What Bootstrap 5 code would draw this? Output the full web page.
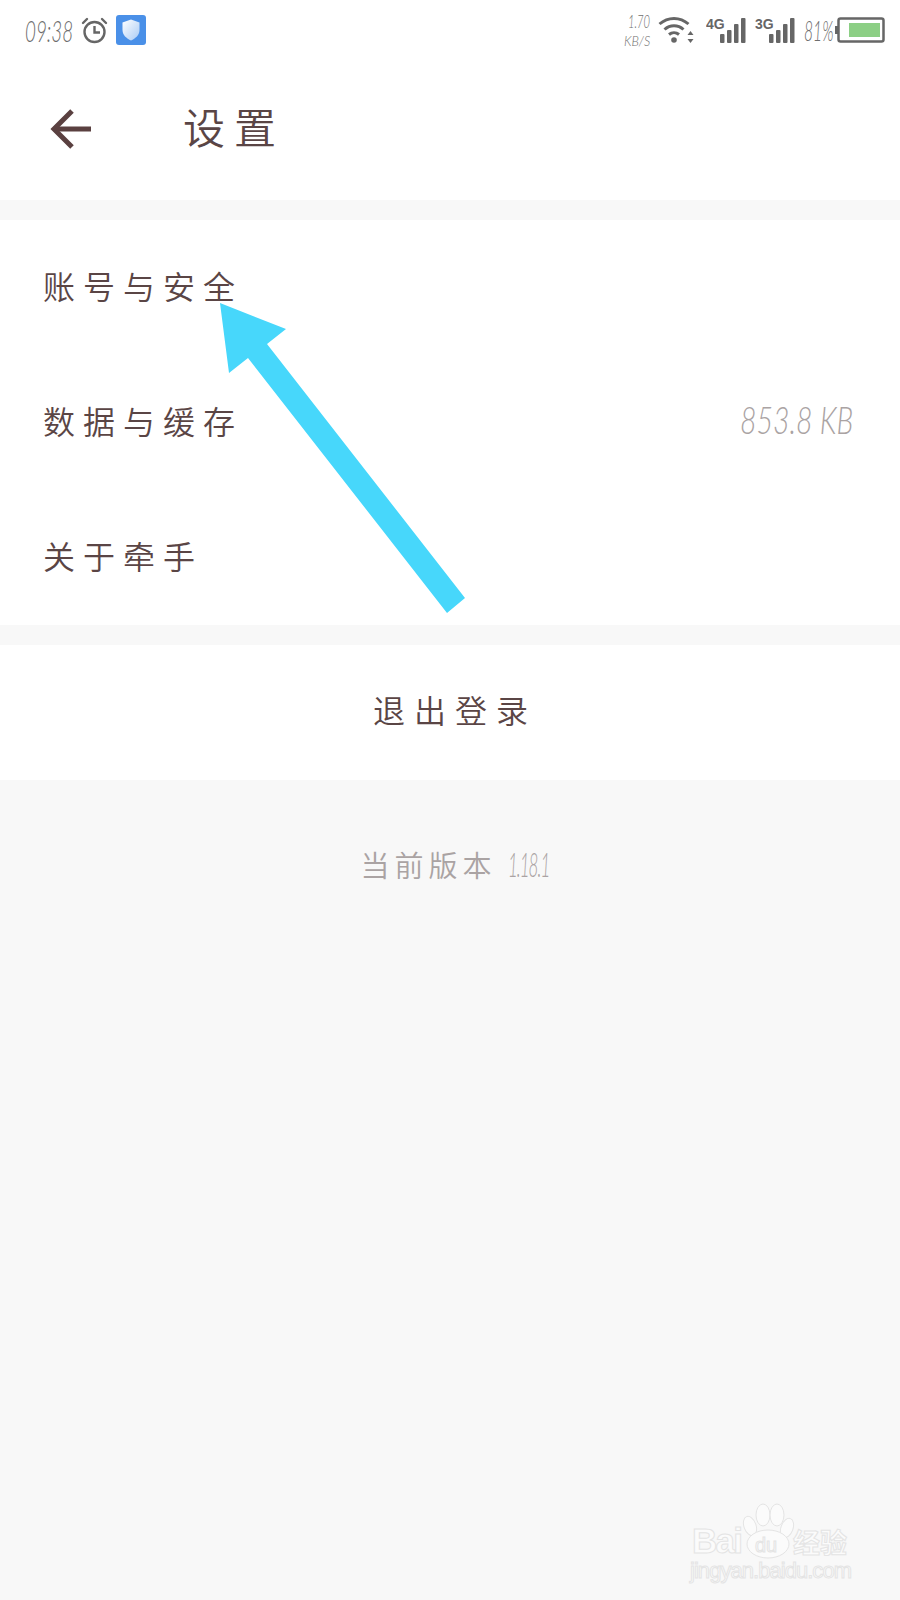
<!DOCTYPE html>
<html lang="zh-CN">
<head>
  <meta charset="UTF-8" />
  <meta name="viewport" content="width=device-width, initial-scale=1" />
  <title>设置</title>
  <link href="https://cdn.jsdelivr.net/npm/bootstrap@5.3.3/dist/css/bootstrap.min.css" rel="stylesheet" />
  <style>
    body { background: #f8f8f8; font-family: "Noto Sans CJK SC", sans-serif; font-weight: 350; color: #5a4545; }
    .page-wrap { position: relative; height: 1600px; overflow: hidden; }
    .squish { display: inline-block; white-space: nowrap; transform-origin: left center; font-family: "Lato", sans-serif; font-style: italic; font-weight: 300; }
    .status-bar { height: 60px; padding: 0 15px 0 25px; color: #6e6e6e; }
    .status-time { width: 48px; font-size: 29px; line-height: 1; transform: scaleX(.65); }
    .status-speed { width: 26px; line-height: 1; }
    .speed-top { font-size: 18px; margin-left: 4px; transform: scaleX(.62); display: block; }
    .speed-low { font-size: 14px; margin-top: 4px; transform: scaleX(.9); display: block; }
    .status-batt { width: 27px; font-size: 27px; line-height: 1; transform: scaleX(.58); }
    .shield-tile { width: 30px; height: 30px; background: #4a90e8; border-radius: 3px; }
    .tool-bar { height: 140px; padding-left: 50px; padding-bottom: 2px; }
    .tool-title { font-size: 42px; letter-spacing: 9px; margin-left: 92px; line-height: 1; margin-bottom: 6px; }
    .set-group { margin-top: 20px; }
    .set-row { height: 135px; padding: 0 45px 6px 43px; border: 0; color: #5a4545; font-size: 32px; letter-spacing: 8px; }
    .set-value { width: 115px; font-size: 37px; color: #aaa3a3; letter-spacing: 0; transform: scaleX(.77); }
    .logout-row { letter-spacing: 9px; padding: 0 43px 8px 53px; }
    .version-line { margin-top: 63px; padding-left: 6px; font-size: 29px; letter-spacing: 5px; color: #aaa3a3; line-height: 42px; }
    .version-num { width: 38px; margin-left: 11px; font-size: 34px; letter-spacing: -2px; transform: scaleX(.5); }
    .arrow-mark { position: absolute; left: 0; top: 0; width: 900px; height: 1600px; pointer-events: none; }
    .wm-ink { fill: #fbfbfb; stroke: #e4e4e4; stroke-width: 1; }
  </style>
</head>
<body>
  <div class="page-wrap">
    <div class="bg-white">
      <div class="status-bar d-flex align-items-center justify-content-between">
        <div class="d-flex align-items-center">
          <span class="squish status-time">09:38</span>
          <svg class="ms-2" width="27" height="27" viewBox="0 0 27 27" fill="none" stroke="#666" stroke-width="2.4">
            <circle cx="13.5" cy="15" r="10" />
            <path d="M13.5 9v6.5h5.5" />
            <path d="M2 6l4-4M25 6l-4-4" stroke-linecap="round" />
          </svg>
          <span class="shield-tile d-flex align-items-center justify-content-center ms-2">
            <svg width="18" height="22" viewBox="0 0 18 22">
              <defs><linearGradient id="sh" x1="0" y1="0" x2="1" y2="1"><stop offset="0" stop-color="#ffffff" /><stop offset="1" stop-color="#a9cbf5" /></linearGradient></defs>
              <path d="M9 0.5L17.5 3.5V11C17.5 16 13.5 19.5 9 21.5C4.5 19.5 0.5 16 0.5 11V3.5Z" fill="url(#sh)" />
            </svg>
          </span>
        </div>
        <div class="d-flex align-items-center">
          <div class="status-speed">
            <span class="squish speed-top">1.70</span>
            <span class="squish speed-low">KB/S</span>
          </div>
          <svg class="ms-2 me-1" width="36" height="28" viewBox="0 0 36 28" fill="none" stroke="#666" stroke-width="3">
            <path d="M1.5 8C10 0.5 22 0.5 30.5 8" />
            <path d="M6.5 13.5C12 8.5 20 8.5 25.5 13.5" />
            <path d="M11 18.5C14 16 18 16 21 18.5" />
            <circle cx="16" cy="24" r="2.8" fill="#666" stroke="none" />
            <path d="M32.5 15l-3 4h6zM32.5 27l-3-4h6z" fill="#666" stroke="none" />
          </svg>
          <svg class="ms-2" width="41" height="27" viewBox="0 0 41 27">
            <text x="0" y="12" font-family="Liberation Sans" font-weight="700" font-size="14" fill="#666">4G</text>
            <rect x="14" y="17" width="4.5" height="9" fill="#666" rx="1" />
            <rect x="21" y="13" width="4.5" height="13" fill="#666" rx="1" />
            <rect x="28" y="7" width="4.5" height="19" fill="#666" rx="1" />
            <rect x="35" y="1" width="4.5" height="25" fill="#666" rx="1" />
          </svg>
          <svg class="ms-2" width="41" height="27" viewBox="0 0 41 27">
            <text x="0" y="12" font-family="Liberation Sans" font-weight="700" font-size="14" fill="#666">3G</text>
            <rect x="14" y="17" width="4.5" height="9" fill="#666" rx="1" />
            <rect x="21" y="13" width="4.5" height="13" fill="#666" rx="1" />
            <rect x="28" y="7" width="4.5" height="19" fill="#666" rx="1" />
            <rect x="35" y="1" width="4.5" height="25" fill="#666" rx="1" />
          </svg>
          <span class="squish status-batt ms-2">81%</span>
          <svg class="ms-1" width="50" height="26" viewBox="0 0 50 26">
            <rect x="0" y="9" width="3" height="8" fill="#666" />
            <rect x="3.5" y="1.5" width="45" height="23" fill="none" stroke="#666" stroke-width="2.5" rx="2" />
            <rect x="14" y="6" width="31" height="14" fill="#8ccf85" />
          </svg>
        </div>
      </div>
      <div class="tool-bar d-flex align-items-center">
        <svg width="41" height="42" viewBox="0 0 41 42" fill="none" stroke="#5a4040" stroke-width="5">
          <path d="M41 21H4" />
          <path d="M22 3L4 21l18 18" />
        </svg>
        <span class="tool-title">设置</span>
      </div>
    </div>

    <div class="list-group list-group-flush set-group rounded-0">
      <div class="list-group-item set-row d-flex align-items-center justify-content-between">账号与安全</div>
      <div class="list-group-item set-row d-flex align-items-center justify-content-between">数据与缓存<span class="squish set-value">853.8 KB</span></div>
      <div class="list-group-item set-row d-flex align-items-center justify-content-between">关于牵手</div>
    </div>

    <div class="list-group list-group-flush set-group rounded-0">
      <div class="list-group-item set-row logout-row d-flex align-items-center justify-content-center">退出登录</div>
    </div>

    <div class="version-line d-flex justify-content-center align-items-center">当前版本<span class="squish version-num">1.18.1</span></div>

    <svg class="arrow-mark" viewBox="0 0 900 1600">
      <polygon points="220,303 286,329 267,344 465,598 447,613 248,358 229,373" fill="#47d7fb" />
      <g class="wm-ink">
        <text x="692" y="1553" font-family="Liberation Sans" font-weight="700" font-size="35" textLength="51">Bai</text>
        <ellipse cx="763" cy="1515" rx="7" ry="11" />
        <ellipse cx="777" cy="1515" rx="7" ry="11" />
        <ellipse cx="750" cy="1526" rx="6" ry="10" transform="rotate(-20 750 1526)" />
        <ellipse cx="787" cy="1528" rx="6" ry="10" transform="rotate(20 787 1528)" />
        <ellipse cx="768" cy="1544" rx="21" ry="14" />
        <text x="755" y="1552" font-family="Liberation Sans" font-size="20">du</text>
        <text x="793" y="1553" font-family="Noto Sans CJK SC" font-weight="700" font-size="27">经验</text>
        <text x="690" y="1578" font-family="Liberation Sans" font-size="22" textLength="162">jingyan.baidu.com</text>
      </g>
    </svg>
  </div>
  <script src="https://cdn.jsdelivr.net/npm/bootstrap@5.3.3/dist/js/bootstrap.bundle.min.js"></script>
</body>
</html>
